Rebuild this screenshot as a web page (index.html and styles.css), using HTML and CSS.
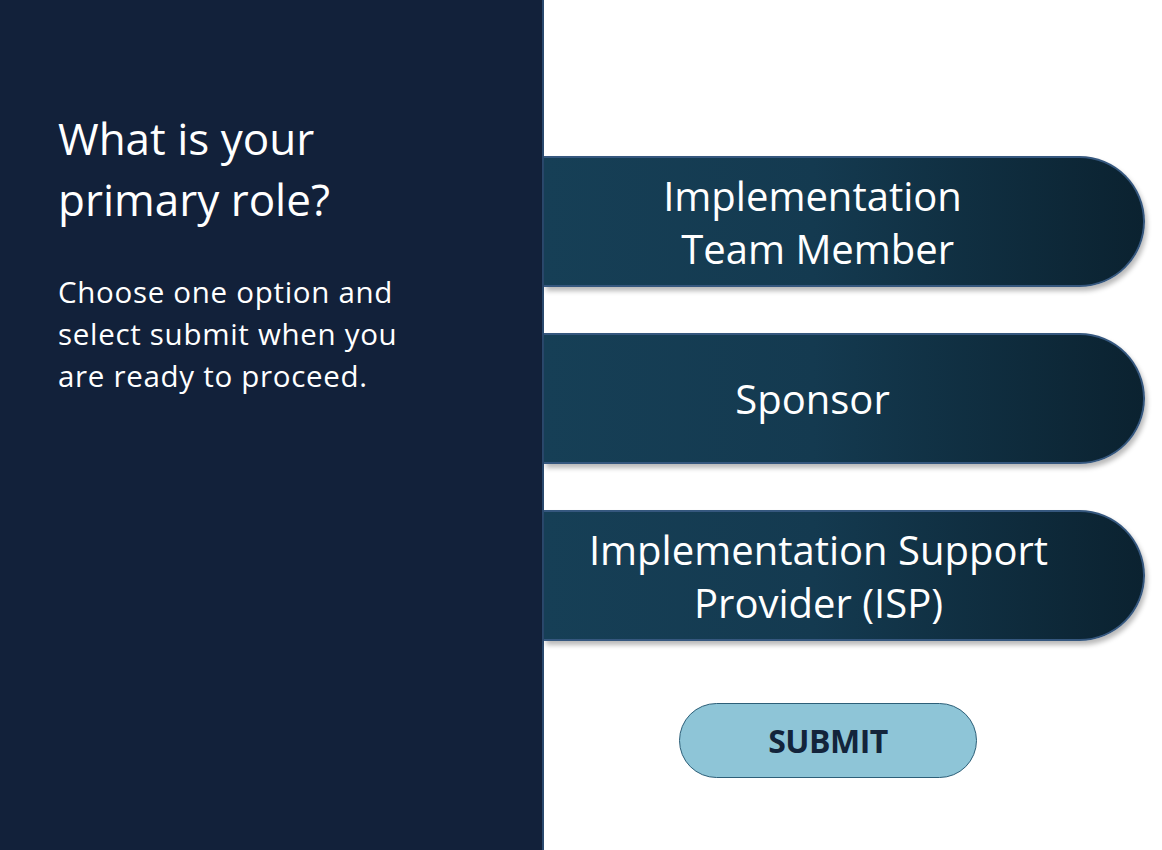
FILE: index.html
```html
<!DOCTYPE html>
<html lang="en">
<head>
<meta charset="utf-8">
<title>Primary role</title>
<link rel="stylesheet" href="styles.css">
</head>
<body>
<main class="screen">
  <section class="intro">
    <h1 class="intro-title">What is your<br>primary role?</h1>
    <p class="intro-text">Choose one option and select submit when you are ready to proceed.</p>
  </section>
  <section class="choices">
    <div class="options">
      <button class="option" type="button">Implementation<br>&nbsp;Team Member</button>
      <button class="option" type="button">Sponsor</button>
      <button class="option option-wide" type="button">Implementation Support<br>Provider (ISP)</button>
    </div>
    <button class="submit" type="button">SUBMIT</button>
  </section>
</main>
</body>
</html>
```

FILE: styles.css
```css
html, body {
  margin: 0;
  padding: 0;
  background: #ffffff;
}

body {
  font-family: "Open Sans", "Noto Sans", sans-serif;
}

.screen {
  display: flex;
  width: 1162px;
  height: 850px;
  overflow: hidden;
}

/* left column with the question */
.intro {
  width: 484px;
  flex: none;
  padding: 108px 0 0 58px;
  background: #12213a;
  border-right: 2px solid #2b4a6e;
  color: #ffffff;
}

.intro-title {
  margin: 0;
  font-size: 44px;
  font-weight: 400;
  line-height: 61px;
}

.intro-text {
  margin: 41px 0 0;
  width: 350px;
  font-size: 29.5px;
  letter-spacing: 0.7px;
  line-height: 42px;
}

/* right column with the answers */
.choices {
  flex: 1;
  display: flex;
  flex-direction: column;
  align-items: flex-start;
  padding-top: 156px;
}

.options {
  display: flex;
  flex-direction: column;
  gap: 46px;
}

.option {
  width: 601px;
  height: 131px;
  padding: 0 62px 0 0;
  border: 2px solid #35577e;
  border-left: none;
  border-radius: 0 66px 66px 0;
  background: linear-gradient(90deg, #163f56 0%, #143a50 45%, #0b2230 100%);
  box-shadow: 2px 4px 5px rgba(0, 0, 0, 0.28);
  color: #ffffff;
  font-family: "Open Sans", "Noto Sans", sans-serif;
  font-size: 40px;
  line-height: 53px;
  text-align: center;
  cursor: pointer;
}

.option-wide {
  padding-right: 50px;
}

.submit {
  margin: 62px 0 0 135px;
  width: 298px;
  height: 75px;
  border: 1px solid #2d5f78;
  border-radius: 38px;
  background: #8ec5d7;
  color: #13243b;
  font-family: "Open Sans", "Noto Sans", sans-serif;
  font-size: 32px;
  font-weight: 700;
  letter-spacing: -0.5px;
  cursor: pointer;
}
```
